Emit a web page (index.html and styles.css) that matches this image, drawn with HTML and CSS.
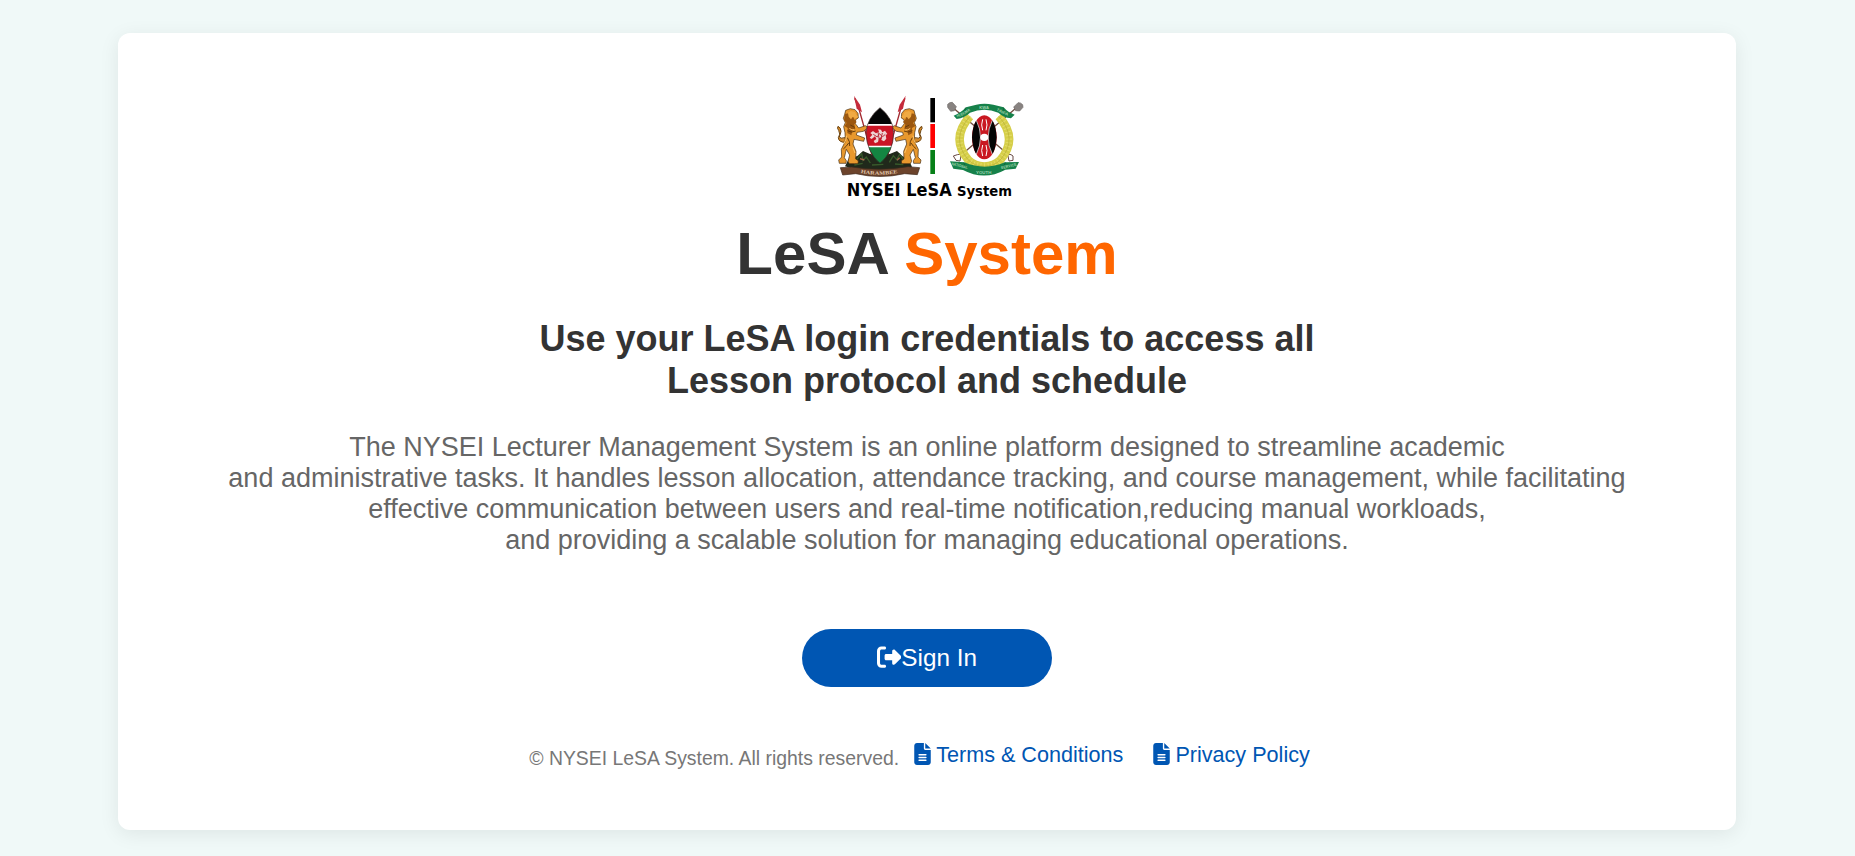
FILE: index.html
```html
<!DOCTYPE html>
<html lang="en">
<head>
<meta charset="utf-8">
<title>LeSA System</title>
<link rel="stylesheet" href="styles.css">
</head>
<body>
<main class="card">
  <svg class="logo" viewBox="0 0 660 360" role="img" aria-label="NYSEI LeSA System">
    <defs>
      <!-- Lion supporter with spear, facing the shield -->
      <g id="lion">
        <path d="M104 40l14 36 38 134" fill="none" stroke="#a32a30" stroke-width="4"/>
        <path d="M102 32l18 27 6 23-16-11z" fill="#c52b3b"/>
        <path d="M76 172q-20 0-21-14 8-10 1-22-6-6-2-12 9 4 9 15-2 9-5 17 3 6 17 2" fill="#d58927" stroke="#69410e" stroke-width="3"/>
        <path d="M74 88l3-12 14-5 14 3 9 11 1 14-8 5-1 12 10 13 20-7 8 6-14 11-19 3-2 8 25 9-3 10-29-6-3 14 9 22-1 23 8 5-1 9H88l-4-7 5-19-10-17-6 25 6 9-1 8H58l-2-10 9-9-1-23 12-24-1-26-4-18 5-12-6-13z" fill="#e8982d" stroke="#432b10" stroke-width="2"/>
        <path d="M75 87l-3 18 8 9-7 9 10 6-1 15 12 7 3-14 9-5-3-14 7-7-8-9-2-11-12-7z" fill="#9b5710"/>
        <path d="M84 84l8-6 13 3 4 9 6 5-7 5-10-4-5 7-7-8z" fill="#f0aa43"/>
        <path d="M82 137q13 8 25 1M82 158q9 12 7 25M70 192q9-7 16-18M91 120l13 7" fill="none" stroke="#673d0c" stroke-width="3"/>
        <path d="M88 130q8 7 15 4M80 152q-2 14-8 24M99 188l6 16" fill="none" stroke="#ffc467" stroke-width="3"/>
      </g>
      <clipPath id="shield"><path d="M180 68Q141 99 138 143q2 59 42 92 40-33 41-92-2-44-41-75z"/></clipPath>
    </defs>
    <!-- Mountain base -->
    <path d="M75 244l10-20 28-12 16-14 21 9 30-7 29 7 22-9 17 16 17 9 11 22-46 12H120z" fill="#20291b"/>
    <path d="M86 234l14-15 7 8 18-21 4 20 10-10 12 18M208 232l12-20 10 12 9-16 13 18 11 4M103 240l25-5M225 237l25 2M156 240l34-2" fill="none" stroke="#385a2b" stroke-width="4"/>
    <path d="M120 221l13 4M231 226l8-8M98 231l7 4" stroke="#a6654c" stroke-width="4"/>
    <use href="#lion"/>
    <use href="#lion" transform="matrix(-1 0 0 1 359 0)"/>
    <!-- Shield -->
    <g clip-path="url(#shield)">
      <path fill="#050505" d="M130 60h100v58H130z"/>
      <path fill="#fff" d="M130 117h100v71H130z"/>
      <path fill="#ca1525" d="M130 122h100v60H130z"/>
      <path fill="#148542" d="M130 187h100v55H130z"/>
    </g>
    <path d="M180 68Q141 99 138 143q2 59 42 92 40-33 41-92-2-44-41-75z" fill="none" stroke="#34231f" stroke-width="2"/>
    <path d="M151 144l8-6 9 7 9-5-3-7 9 1 4 8 8-5 7 10-5 3 2 11-7 8-8-4 2-10-9 5-3 11-9 4-4-7 8-6-4-8-10 8-6-4 8-9z" fill="#eed4d3"/>
    <path d="M160 148l12 8 6-10 10 9 8-7M174 141l4 25M187 144l-4 18" fill="none" stroke="#b7303d" stroke-width="3"/>
    <!-- Motto ribbon -->
    <path d="M61 248l34-2q84 14 169-1l35 3-7 21-38-3q-74 17-147 0l-39 4z" fill="#6c432b" stroke="#3c281d" stroke-width="2"/>
    <path id="motto" d="M122 264q58 11 116-1" fill="none"/>
    <text class="motto"><textPath href="#motto" textLength="112" lengthAdjust="spacingAndGlyphs">HARAMBEE</textPath></text>
    <!-- Flag bar -->
    <path fill="#000" d="M331 39h14v73h-14z"/>
    <path fill="#f00" d="M331 117h14v72h-14z"/>
    <path fill="#078018" d="M331 195h14v72h-14z"/>
    <!-- Crossed shovels -->
    <path d="M399 68l171 145M591 67L420 213" stroke="#6f4c3f" stroke-width="4"/>
    <path d="M383 58q6-7 14-6l12 13-6 12-11 2-9-12zM608 59q-6-7-14-6l-13 13 6 11 12 1 10-11z" fill="#888381" stroke="#6f6a68" stroke-width="2"/>
    <path d="M424 207l-4 21-12-2-8-13 12-4zM563 207l4 21 12-2 0-13-6-4z" fill="#fff" stroke="#684943" stroke-width="3"/>
    <!-- Wreath -->
    <path d="M450 94q-60 66-5 131 18 18 48 19 30-1 48-19 55-65-5-131" fill="none" stroke="#d5ce48" stroke-width="25"/>
    <path d="M450 94q-60 66-5 131 18 18 48 19 30-1 48-19 55-65-5-131" fill="none" stroke="#e4dc68" stroke-width="19" stroke-dasharray="3 8"/>
    <path d="M450 94q-60 66-5 131 18 18 48 19 30-1 48-19 55-65-5-131" fill="none" stroke="#b8ae38" stroke-width="2"/>
    <!-- Maasai shield -->
    <ellipse cx="493" cy="157" rx="37" ry="66" fill="#c91821"/>
    <path d="M469 106q25 51 0 102-11-18-13-51 2-33 13-51zM517 106q-25 51 0 102 11-18 13-51-2-33-13-51z" fill="#050505"/>
    <path d="M469 106q25 51 0 102M517 106q-25 51 0 102" fill="none" stroke="#fff" stroke-width="2"/>
    <ellipse cx="493" cy="157" rx="12" ry="11" fill="#fff"/>
    <path d="M488 103q-6 17 0 33M498 103q6 17 0 33M488 180q-6 17 0 33M498 180q6 17 0 33" fill="none" stroke="#fff" stroke-width="3"/>
    <!-- Green ribbons -->
    <path d="M401 92q23-9 37-25l31-8q23-5 51 0l31 8q13 16 33 22l-11 11q-22-2-38-17-42-17-85 0-15 15-40 19z" fill="#16814a"/>
    <path d="M390 229l43 3q62 26 121 0l43-1-10 20-31 3q-63 35-127 1l-29-4z" fill="#16814a"/>
    <path d="M436 68l-2 19M550 68l3 17M431 233l10 20M556 232l-8 24" stroke="#0c5b32" stroke-width="2"/>
    <path id="ribbon-left" d="M411 97q24-6 43-24" fill="none"/>
    <path id="ribbon-right" d="M529 76q19 11 41 19" fill="none"/>
    <path id="ribbon-base-left" d="M394 240l52 13" fill="none"/>
    <path id="ribbon-base-right" d="M544 253l52-13" fill="none"/>
    <text class="ribbon"><textPath href="#ribbon-left" textLength="46" lengthAdjust="spacingAndGlyphs">HUDUMA</textPath></text>
    <text class="ribbon" x="478" y="71" textLength="29" lengthAdjust="spacingAndGlyphs">KWA</text>
    <text class="ribbon"><textPath href="#ribbon-right" textLength="38" lengthAdjust="spacingAndGlyphs">TAIFA</textPath></text>
    <text class="ribbon"><textPath href="#ribbon-base-left" textLength="50" lengthAdjust="spacingAndGlyphs">NATIONAL</textPath></text>
    <text class="ribbon" x="468" y="266" textLength="46" lengthAdjust="spacingAndGlyphs">YOUTH</text>
    <text class="ribbon"><textPath href="#ribbon-base-right" textLength="48" lengthAdjust="spacingAndGlyphs">SERVICE</textPath></text>
    <!-- Wordmark -->
    <text class="wordmark" x="80" y="334" textLength="315" lengthAdjust="spacingAndGlyphs">NYSEI LeSA</text>
    <text class="wordmark wordmark-small" x="411" y="334" textLength="165" lengthAdjust="spacingAndGlyphs">System</text>
  </svg>
  <h1 class="title">LeSA <span class="accent">System</span></h1>
  <h2 class="subtitle">Use your LeSA login credentials to access all<br>Lesson protocol and schedule</h2>
  <p class="intro">The NYSEI Lecturer Management System is an online platform designed to streamline academic<br>and administrative tasks. It handles lesson allocation, attendance tracking, and course management, while facilitating<br>effective communication between users and real-time notification,reducing manual workloads,<br>and providing a scalable solution for managing educational operations.</p>
  <a class="button" href="#"><svg class="button-icon" viewBox="0 0 512 512" aria-hidden="true"><path fill="currentColor" d="M377.900 105.900L500.700 228.700c7.200 7.200 11.300 17.100 11.300 27.300s-4.100 20.100-11.300 27.300L377.900 406.100c-6.400 6.400-15 9.900-24 9.900c-18.700 0-33.900-15.200-33.900-33.900V320H192c-17.700 0-32-14.300-32-32V224c0-17.700 14.300-32 32-32H320V129.900c0-18.700 15.200-33.900 33.900-33.900c9 0 17.600 3.600 24 9.900zM160 96H96c-17.700 0-32 14.300-32 32V384c0 17.700 14.300 32 32 32h64c17.700 0 32 14.300 32 32s-14.300 32-32 32H96c-53 0-96-43-96-96V128C0 75 43 32 96 32h64c17.700 0 32 14.300 32 32s-14.300 32-32 32z"/></svg>Sign In</a>
  <footer class="footer">
    <span class="copyright">© NYSEI LeSA System. All rights reserved.</span>
    <a class="link" href="#"><svg class="link-icon" viewBox="0 0 384 512" aria-hidden="true"><path fill="currentColor" d="M64 0C28.700 0 0 28.700 0 64V448c0 35.300 28.700 64 64 64H320c35.300 0 64-28.700 64-64V160H256c-17.700 0-32-14.300-32-32V0H64zM256 0V128H384L256 0zM112 256H272c8.800 0 16 7.200 16 16s-7.200 16-16 16H112c-8.800 0-16-7.200-16-16s7.200-16 16-16zm0 64H272c8.800 0 16 7.200 16 16s-7.200 16-16 16H112c-8.800 0-16-7.200-16-16s7.200-16 16-16zm0 64H272c8.800 0 16 7.200 16 16s-7.200 16-16 16H112c-8.800 0-16-7.200-16-16s7.200-16 16-16z"/></svg>Terms &amp; Conditions</a>
    <a class="link" href="#"><svg class="link-icon" viewBox="0 0 384 512" aria-hidden="true"><path fill="currentColor" d="M64 0C28.700 0 0 28.700 0 64V448c0 35.300 28.700 64 64 64H320c35.300 0 64-28.700 64-64V160H256c-17.700 0-32-14.300-32-32V0H64zM256 0V128H384L256 0zM112 256H272c8.800 0 16 7.200 16 16s-7.200 16-16 16H112c-8.800 0-16-7.200-16-16s7.200-16 16-16zm0 64H272c8.800 0 16 7.200 16 16s-7.200 16-16 16H112c-8.800 0-16-7.200-16-16s7.200-16 16-16zm0 64H272c8.800 0 16 7.200 16 16s-7.200 16-16 16H112c-8.800 0-16-7.200-16-16s7.200-16 16-16z"/></svg>Privacy Policy</a>
  </footer>
</main>
</body>
</html>
```
FILE: styles.css
```css
* { box-sizing: border-box; }
body {
  margin: 0;
  height: 856px;
  padding: 33px 119px 26px 118px;
  overflow: hidden;
  background: #f0f9f8;
  font-family: "Liberation Sans", Arial, sans-serif;
}
.card {
  display: flex;
  flex-direction: column;
  align-items: center;
  height: 797px;
  padding-top: 52px;
  border-radius: 12px;
  background: #fff;
  box-shadow: 0 4px 20px rgba(0, 0, 0, 0.08);
  text-align: center;
}
.logo { width: 220px; height: 120px; margin-left: 5px; flex: none; }
.motto { font: bold 15px "Liberation Serif", serif; fill: #e0c8ad; }
.ribbon { font: bold 12px "Liberation Sans", sans-serif; fill: #9fd3ac; }
.wordmark { font: bold 54px "DejaVu Sans Condensed", "DejaVu Sans", sans-serif; fill: #000; }
.wordmark-small { font-size: 42px; }
.title { margin: 14px 0 0; font-size: 60px; line-height: 69px; color: #333; }
.accent { color: #f60; }
.subtitle { margin: 30px 0 0; font-size: 36px; line-height: 42px; color: #333; }
.intro { margin: 30px 0 0; font-size: 27px; line-height: 31px; color: #666; }
.button {
  display: flex;
  align-items: center;
  justify-content: center;
  width: 250px;
  height: 58px;
  margin-top: 73px;
  border-radius: 29px;
  background: #0056b3;
  color: #fff;
  font-size: 24.3px;
  text-decoration: none;
}
.button-icon { width: 24.3px; height: 24.3px; margin-bottom: 2px; }
.footer { display: flex; margin-top: 53px; height: 32px; }
.copyright { padding-top: 7px; font-size: 19.4px; line-height: 22px; color: #777; }
.link {
  display: flex;
  margin: 0 15px;
  color: #0056b3;
  font-size: 21.6px;
  line-height: 30px;
  text-decoration: none;
}
.link-icon { width: 17px; height: 22px; margin: 3px 5px 0 0; }
```
